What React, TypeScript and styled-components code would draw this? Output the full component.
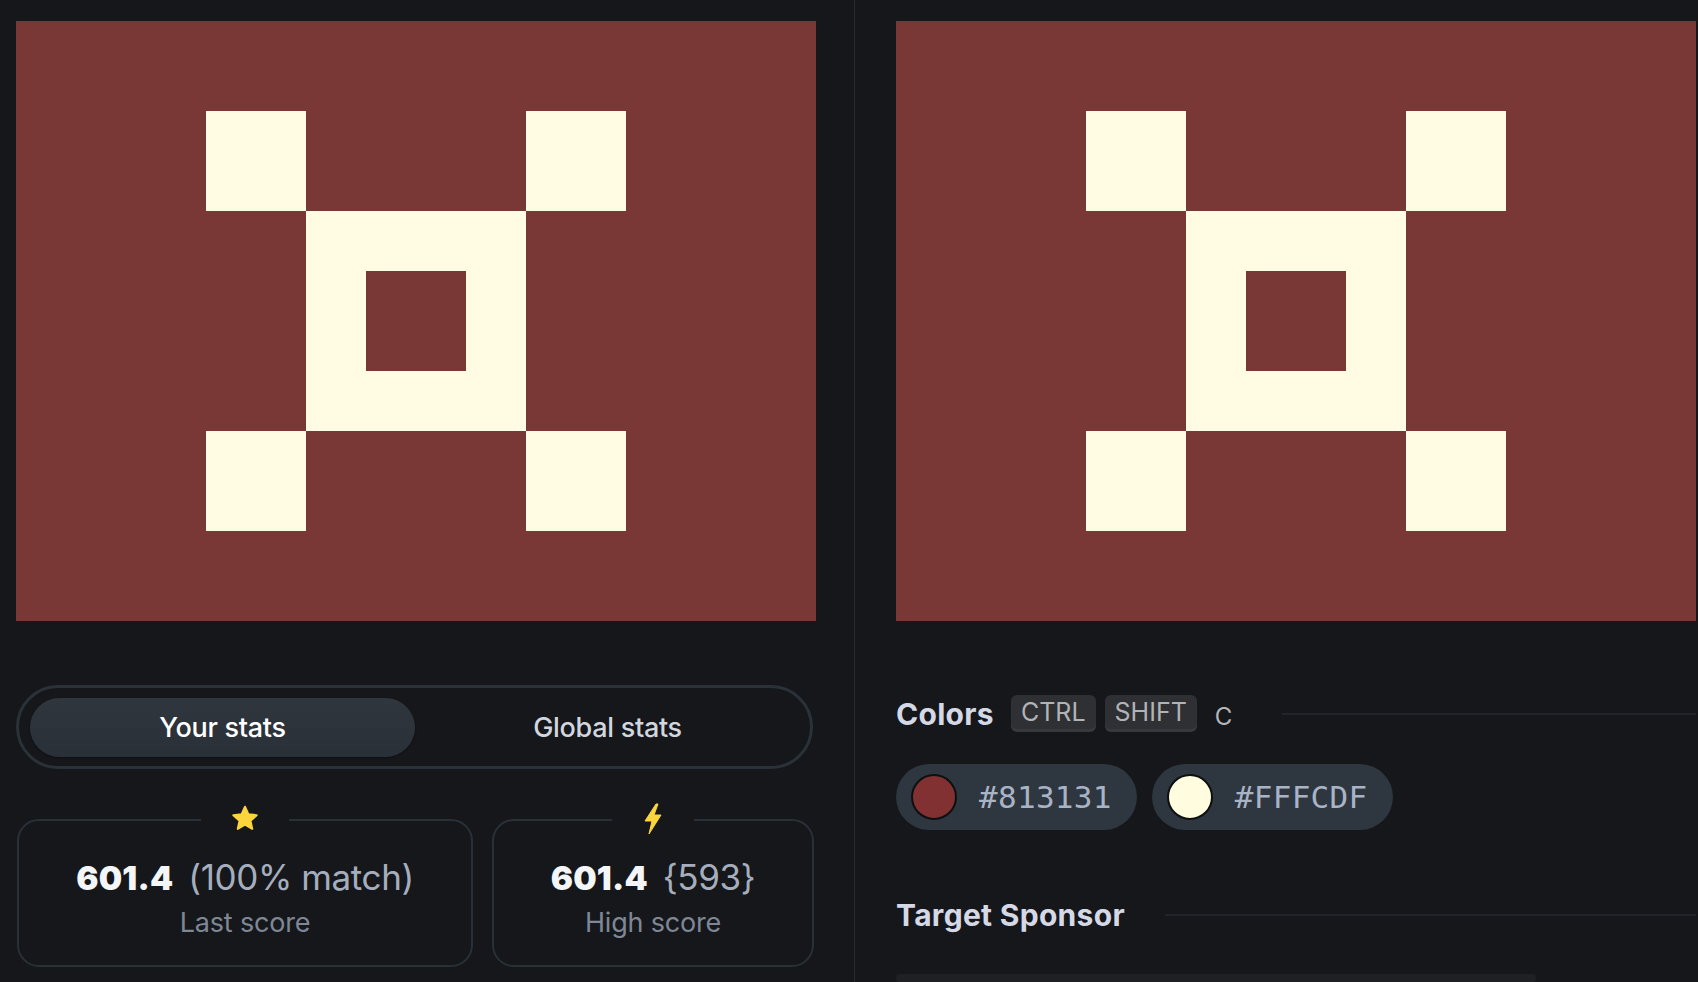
import React from "react";
import styled, { createGlobalStyle } from "styled-components";

const GlobalStyle = createGlobalStyle`
  html, body { margin: 0; padding: 0; background: #15171b; }
  body { font-family: Inter, "Noto Sans", sans-serif; overflow: hidden; }
  * { box-sizing: border-box; }
`;

const Page = styled.div`
  display: flex;
  height: 982px;
  padding: 0 2px 0 16px;
  background: #15171b;
`;

const Column = styled.div`
  width: 800px;
  flex: 0 0 800px;
  display: flex;
  flex-direction: column;
  padding-top: 21px;
`;

const Divider = styled.div`
  width: 1px;
  flex: 0 0 1px;
  background: #262d31;
  margin: 0 41px 0 38px;
`;

const CanvasFrame = styled.div`
  width: 800px;
  height: 600px;
  flex: 0 0 600px;
  svg { display: block; }
`;

const Toggle = styled.div`
  margin-top: 64px;
  width: 797px;
  height: 84px;
  border: 3px solid #2a3139;
  border-radius: 42px;
  padding: 10px 10px 10px 11px;
  display: grid;
  grid-template-columns: 385px 385px;
`;

const ToggleButton = styled.div<{ $active?: boolean }>`
  height: 59px;
  border-radius: 30px;
  display: flex;
  align-items: center;
  justify-content: center;
  font-size: 27px;
  font-weight: 500;
  letter-spacing: -0.3px;
  color: ${(p) => (p.$active ? "#ffffff" : "#d2d6de")};
  background: ${(p) =>
    p.$active ? "linear-gradient(180deg, #30363e 0%, #2a3038 100%)" : "transparent"};
  box-shadow: ${(p) => (p.$active ? "0 1px 2px rgba(0,0,0,0.35)" : "none")};
`;

const Cards = styled.div`
  margin-top: 50px;
  display: grid;
  grid-template-columns: 456px 322px;
  column-gap: 19px;
  padding-left: 1px;
`;

const Card = styled.div`
  position: relative;
  height: 148px;
  border: 2px solid #2a3037;
  border-radius: 22px;
  display: flex;
  flex-direction: column;
  align-items: center;
  padding-top: 36px;
`;

const Badge = styled.div`
  position: absolute;
  top: -19px;
  left: 50%;
  transform: translateX(-50%);
  background: #15171b;
  padding: 0 29px;
  height: 34px;
  display: flex;
  align-items: center;
  justify-content: center;
`;

const ScoreLine = styled.div`
  display: flex;
  align-items: baseline;
  gap: 15px;
  line-height: 40px;
  height: 40px;
`;

const ScoreValue = styled.span`
  font-size: 33px;
  font-weight: 900;
  color: #f4f5f7;
  letter-spacing: 0.2px;
`;

const ScoreExtra = styled.span`
  font-size: 35px;
  font-weight: 400;
  color: #a6aebd;
  letter-spacing: -0.4px;
`;

const ScoreLabel = styled.div`
  margin-top: 10px;
  font-size: 27px;
  line-height: 32px;
  color: #7f8796;
  letter-spacing: -0.2px;
`;

const HeadingRow = styled.div<{ $top: number; $height: number }>`
  margin-top: ${(p) => p.$top}px;
  height: ${(p) => p.$height}px;
  display: flex;
  align-items: center;
`;

const Heading = styled.span`
  font-size: 30px;
  font-weight: 700;
  color: #d5d9e6;
  letter-spacing: 0.3px;
  line-height: 1;
`;

const Key = styled.span<{ $left: number }>`
  margin-left: ${(p) => p.$left}px;
  height: 34px;
  padding: 0 10px;
  border-radius: 6px;
  background: #2e3033;
  box-shadow: 0 3px 0 #38393d;
  color: #b1b3b7;
  font-size: 25px;
  line-height: 34px;
  margin-top: -3px;
`;

const KeyHint = styled.span`
  margin-left: 18px;
  margin-top: 6px;
  color: #b4b6ba;
  font-size: 24px;
`;

const Rule = styled.div<{ $left: number }>`
  flex: 1;
  height: 2px;
  margin-left: ${(p) => p.$left}px;
  background: #212429;
`;

const Chips = styled.div`
  margin-top: 33px;
  display: flex;
  gap: 15px;
`;

const Chip = styled.div`
  height: 66px;
  border-radius: 33px;
  background: #2e363f;
  display: flex;
  align-items: center;
  padding: 0 25px 0 15px;
  gap: 22px;
`;

const Swatch = styled.span<{ $color: string }>`
  width: 46px;
  height: 46px;
  border-radius: 50%;
  background: ${(p) => p.$color};
  border: 2px solid #0e0f11;
`;

const ChipText = styled.span`
  font-family: "DejaVu Sans Mono", "Liberation Mono", monospace;
  font-size: 31px;
  color: #a9b3c6;
  letter-spacing: 0.3px;
`;

const SponsorBox = styled.div`
  margin-top: 44px;
  width: 640px;
  height: 40px;
  border-radius: 8px;
  background: #1e2024;
`;

const Pattern: React.FC = () => (
  <svg width="800" height="600" viewBox="0 0 800 600">
    <rect x="0" y="0" width="800" height="600" fill="#793735" />
    <rect x="190" y="90" width="100" height="100" fill="#fffce3" />
    <rect x="510" y="90" width="100" height="100" fill="#fffce3" />
    <rect x="190" y="410" width="100" height="100" fill="#fffce3" />
    <rect x="510" y="410" width="100" height="100" fill="#fffce3" />
    <path d="M290 190 H510 V410 H290 Z M350 250 V350 H450 V250 Z" fill="#fffce3" fillRule="evenodd" />
  </svg>
);

const StarIcon: React.FC = () => (
  <svg width="30" height="30" viewBox="0 0 24 24">
    <path
      d="M12 2.2l2.75 6.05 6.6.7-4.95 4.45 1.4 6.5L12 16.6l-5.8 3.3 1.4-6.5L2.65 8.95l6.6-.7z"
      fill="#fcd43c"
      stroke="#fcd43c"
      strokeWidth="1.6"
      strokeLinejoin="round"
    />
  </svg>
);

const BoltIcon: React.FC = () => (
  <svg width="24" height="32" viewBox="0 0 24 32">
    <path d="M15 1 L4 18 H11 L8 31 L20 12 H13 L17 1 Z" fill="#fcd43c" stroke="#fcd43c" strokeWidth="1" strokeLinejoin="round" />
  </svg>
);

export default function App() {
  return (
    <>
      <GlobalStyle />
      <Page>
        <Column>
          <CanvasFrame>
            <Pattern />
          </CanvasFrame>
          <Toggle>
            <ToggleButton $active>Your stats</ToggleButton>
            <ToggleButton>Global stats</ToggleButton>
          </Toggle>
          <Cards>
            <Card>
              <Badge>
                <StarIcon />
              </Badge>
              <ScoreLine>
                <ScoreValue>601.4</ScoreValue>
                <ScoreExtra>(100% match)</ScoreExtra>
              </ScoreLine>
              <ScoreLabel>Last score</ScoreLabel>
            </Card>
            <Card>
              <Badge>
                <BoltIcon />
              </Badge>
              <ScoreLine>
                <ScoreValue>601.4</ScoreValue>
                <ScoreExtra>{"{593}"}</ScoreExtra>
              </ScoreLine>
              <ScoreLabel>High score</ScoreLabel>
            </Card>
          </Cards>
        </Column>
        <Divider />
        <Column>
          <CanvasFrame>
            <Pattern />
          </CanvasFrame>
          <HeadingRow $top={75} $height={37}>
            <Heading>Colors</Heading>
            <Key $left={17}>CTRL</Key>
            <Key $left={9}>SHIFT</Key>
            <KeyHint>C</KeyHint>
            <Rule $left={50} />
          </HeadingRow>
          <Chips>
            <Chip>
              <Swatch $color="#813131" />
              <ChipText>#813131</ChipText>
            </Chip>
            <Chip>
              <Swatch $color="#FFFCDF" />
              <ChipText>#FFFCDF</ChipText>
            </Chip>
          </Chips>
          <HeadingRow $top={70} $height={40}>
            <Heading>Target Sponsor</Heading>
            <Rule $left={40} />
          </HeadingRow>
          <SponsorBox />
        </Column>
      </Page>
    </>
  );
}
